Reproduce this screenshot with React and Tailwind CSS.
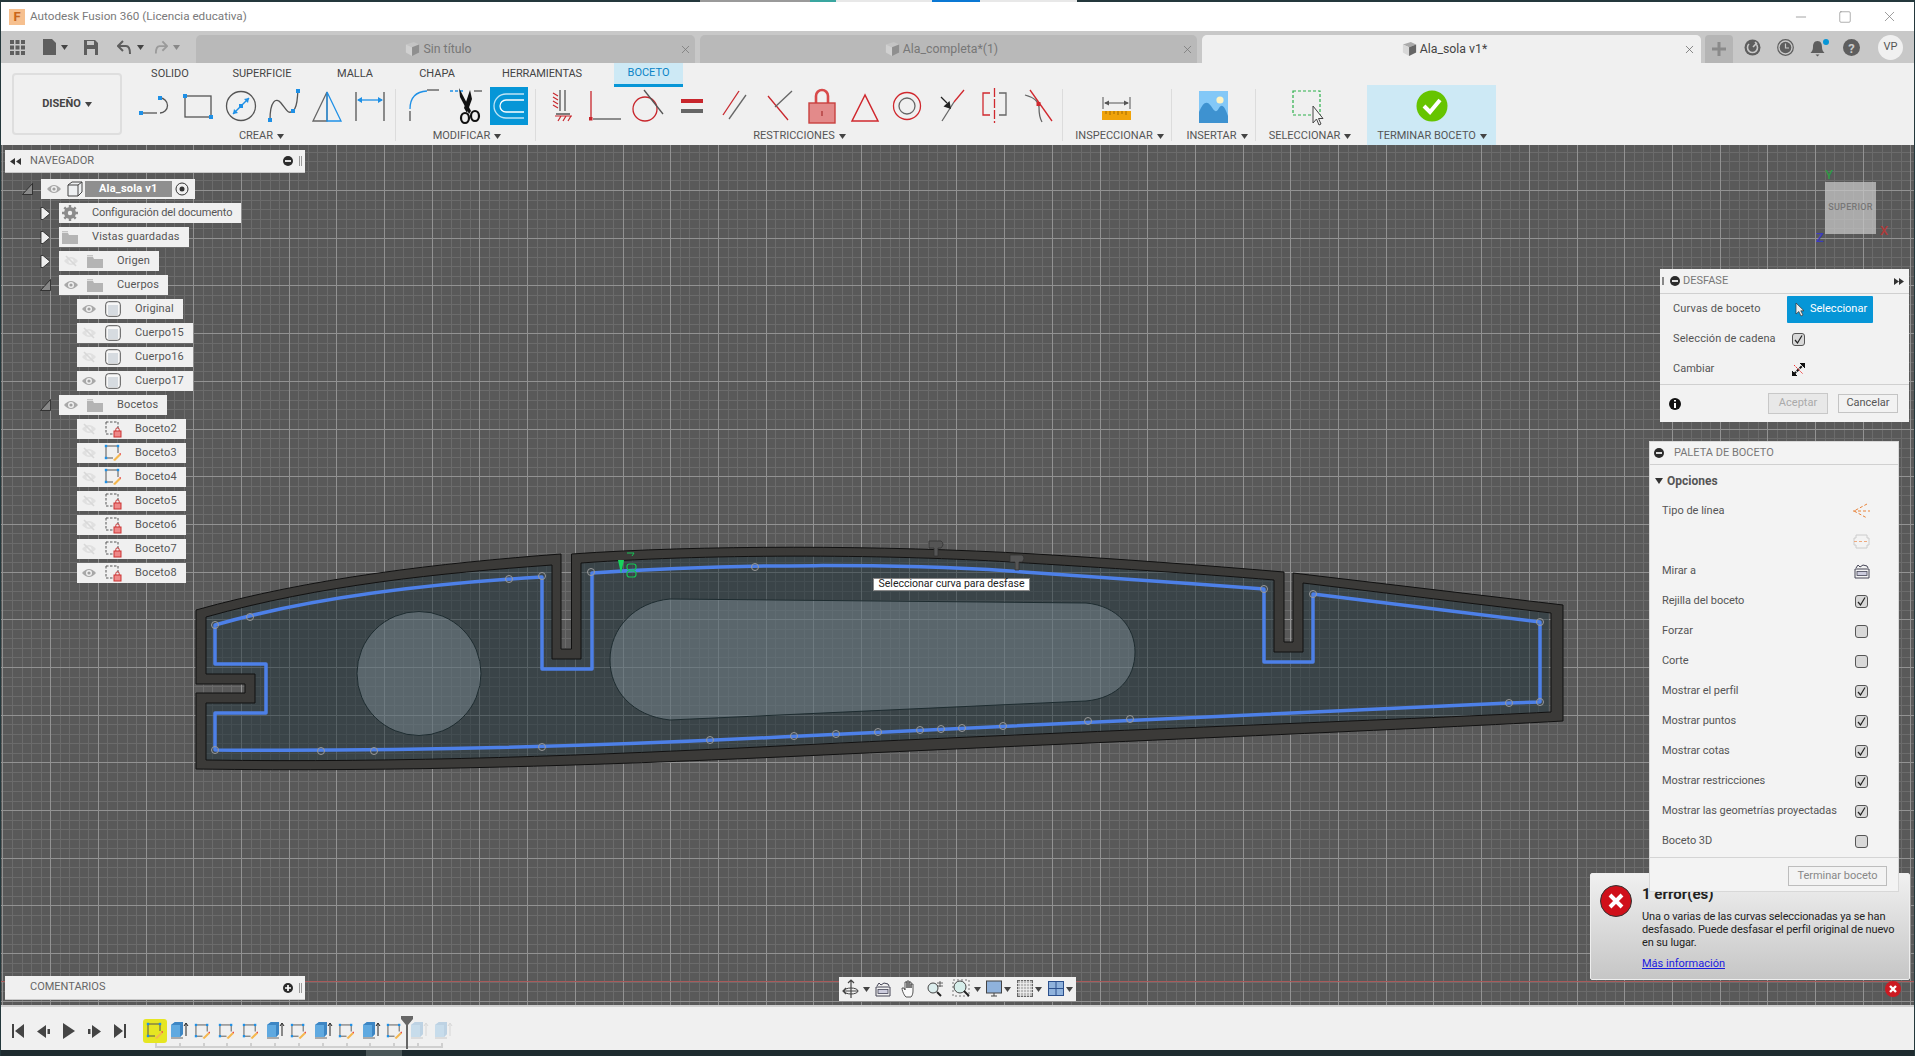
import { Minus, Square, X } from "lucide-react";

const Caret = ({ className = "ml-1" }) => (
  <svg width="7" height="5" viewBox="0 0 7 5" className={"shrink-0 " + className}><path d="M0 0H7L3.5 5Z" fill="#444" /></svg>
);

const Sq = ({ x, y, s = 4 }) => <rect x={x - s / 2} y={y - s / 2} width={s} height={s} fill="#1e90e6" />;

const CubeIcon = ({ dark }) => (
  <svg width="15" height="16" viewBox="0 0 17 18" className="mr-[3px]">
    <path d="M1 4L10 1L16 4L8 7Z" fill={dark ? "#aaa" : "#c4c4c4"} />
    <path d="M1 4L8 7V17L1 13Z" fill={dark ? "#d8d8d8" : "#d0d0d0"} />
    <path d="M8 7L16 4V13L8 17Z" fill={dark ? "#666" : "#8f8f8f"} />
  </svg>
);

const Tab = ({ label, cls, active }) => (
  <div className={"relative flex h-[28px] items-center justify-center rounded-t-[5px] pr-[14px] " + cls}>
    <CubeIcon dark={active} />
    <span className={active ? "text-[12.3px] text-[#444]" : "text-[12.3px] text-[#777]"}>{label}</span>
    <X size={13} strokeWidth={1.4} className={active ? "absolute right-[5px] text-[#666]" : "absolute right-[3px] text-[#777]"} />
  </div>
);

// ribbon icons, 32x38 with y=0 at page y 87
const tools = {
  line: (<g fill="none"><path d="M3 26H18" stroke="#555" strokeWidth="1.3" /><path d="M21 11A7.5 7.5 0 0 1 21 26" stroke="#555" strokeWidth="1.3" /><Sq x={2} y={26} /><Sq x={21} y={11} /></g>),
  rect: (<g fill="none"><rect x="3" y="9" width="26" height="21" stroke="#555" strokeWidth="1.3" /><Sq x={3} y={9} /><Sq x={29} y={30} /></g>),
  circle: (<g fill="none"><circle cx="16" cy="19" r="14.5" stroke="#555" strokeWidth="1.3" /><path d="M8 27L24 11" stroke="#1e90e6" strokeWidth="1.5" /><path d="M24 11l-5 1 4 4ZM8 27l5-1-4-4Z" fill="#1e90e6" /><Sq x={16} y={19} /></g>),
  spline: (<g fill="none"><path d="M2 33C2 14 8 10 13 16S20 28 25 24 29 10 30 4" stroke="#555" strokeWidth="1.3" /><Sq x={2} y={33} /><Sq x={25} y={24} /><Sq x={30} y={4} /></g>),
  tri: (<g fill="none"><path d="M16 5L2 34H16Z" stroke="#666" strokeWidth="1.3" /><path d="M16 5L30 34H16Z" stroke="#1e90e6" strokeWidth="1.3" /></g>),
  dim: (<g fill="none"><path d="M2 5V34M30 5V34" stroke="#555" strokeWidth="1.3" /><path d="M4 13H28" stroke="#1e90e6" strokeWidth="1.3" /><path d="M3 13l5-3v6ZM29 13l-5-3v6Z" fill="#1e90e6" /></g>),
  fillet: (<g fill="none"><path d="M3 34V24" stroke="#555" strokeWidth="1.3" /><path d="M3 22Q3 5 20 4" stroke="#1e90e6" strokeWidth="1.3" /><path d="M20 3H32" stroke="#555" strokeWidth="1.3" /></g>),
  scissors: (<g fill="none"><path d="M0 4H14" stroke="#1e90e6" strokeWidth="1.3" strokeDasharray="3 2" /><path d="M24 4H32" stroke="#555" strokeWidth="1.3" /><path d="M9 1L21 24L19 27L10 10Z" fill="#111" /><path d="M20 3L22 12L17 26L14 21Z" fill="#111" /><ellipse cx="15" cy="31" rx="4" ry="5" stroke="#111" strokeWidth="2.2" /><ellipse cx="25" cy="29" rx="4" ry="5" stroke="#111" strokeWidth="2.2" /></g>),
  hatch: (<g fill="none"><path d="M14 3V24M19 3V24M10 27H24" stroke="#555" strokeWidth="1.3" /><path d="M7 6l5 3M7 10l5 3M7 14l5 3M7 18l5 3M12 34l3-5M17 34l3-5M22 34l3-5M9 29H26" stroke="#c8262c" strokeWidth="1.2" /></g>),
  perp: (<g fill="none"><path d="M2 4V31" stroke="#c8262c" strokeWidth="1.3" /><path d="M4 32H32" stroke="#555" strokeWidth="1.3" /><rect x="0" y="30" width="3.5" height="3.5" fill="#c8262c" /></g>),
  tangent: (<g fill="none"><circle cx="13" cy="22" r="12" stroke="#c8262c" strokeWidth="1.3" /><path d="M12 3L31 27" stroke="#555" strokeWidth="1.3" /></g>),
  equal: (<g><rect x="5" y="12" width="22" height="4" fill="#c8262c" /><rect x="5" y="22" width="22" height="4" fill="#666" /></g>),
  parallel: (<g fill="none"><path d="M4 28L20 4" stroke="#c8262c" strokeWidth="1.3" /><path d="M10 32L27 8" stroke="#666" strokeWidth="1.3" /></g>),
  perpendicular: (<g fill="none"><path d="M6 9L26 33" stroke="#c8262c" strokeWidth="1.3" /><path d="M13 20L30 4" stroke="#666" strokeWidth="1.3" /></g>),
  lock: (<g><path d="M10 17V9a6 6 0 0 1 12 0V17" fill="none" stroke="#d84a4a" strokeWidth="2.6" /><rect x="3" y="16" width="26" height="20" fill="#e38a8a" stroke="#c8403f" strokeWidth="1.4" /><path d="M16 24V29" stroke="#a83030" strokeWidth="1.2" /></g>),
  triangle: (<path d="M16 8L3 34H29Z" fill="none" stroke="#d0282e" strokeWidth="1.5" />),
  concentric: (<g fill="none"><circle cx="15" cy="19" r="13.5" stroke="#d0282e" strokeWidth="1.3" /><circle cx="15" cy="19" r="8" stroke="#666" strokeWidth="1.3" /></g>),
  midpoint: (<g fill="none"><path d="M6 34L18 15" stroke="#666" strokeWidth="1.3" /><path d="M18 15L28 3" stroke="#d0282e" strokeWidth="1.3" /><path d="M5 10L11 16" stroke="#222" strokeWidth="1.2" /><path d="M15 22l-1.5-8-6 5.5Z" fill="#222" /></g>),
  symmetric: (<g fill="none"><path d="M11 6H4V28H11" stroke="#d0282e" strokeWidth="1.3" /><path d="M20 6H27V28H20" stroke="#666" strokeWidth="1.3" /><path d="M15.5 1V36" stroke="#d0282e" strokeWidth="1.3" strokeDasharray="9 2" /></g>),
  curvature: (<g fill="none"><path d="M3 8C10 10 17 14 17 20S17 30 20 35" stroke="#666" strokeWidth="1.3" /><path d="M8 3L30 34" stroke="#d0282e" strokeWidth="1.3" /><rect x="14.5" y="15" width="4" height="4" fill="#d0282e" /></g>),
  measure: (<g><path d="M2 10V22M29 10V22" stroke="#555" strokeWidth="1" /><path d="M4 16H27" stroke="#555" strokeWidth="1" /><path d="M3 16l5-2.5v5ZM28 16l-5-2.5v5Z" fill="#555" /><rect x="1" y="24" width="29" height="9" fill="#f0a30a" /><path d="M5 24v3M9 24v4M13 24v3M17 24v4M21 24v3M25 24v4" stroke="#8a5c00" strokeWidth=".8" /></g>),
  image: (<g><rect x="1" y="4" width="29" height="32" fill="#83c8f7" /><path d="M1 25C5 15 9 13 13 19S18 26 21 21 27 20 30 29V36H1Z" fill="#3e92d0" /><circle cx="22" cy="13" r="3.6" fill="#fdf3c4" /></g>),
  select: (<g fill="none"><rect x="2" y="4" width="27" height="24" stroke="#2bb04a" strokeWidth="1.2" strokeDasharray="3 2" /><path d="M22 19V36L25.5 32L28 38L30 37L27.5 31.5H32Z" fill="#f4f4f4" stroke="#444" strokeWidth="1" /></g>),
};

const Tool = ({ name }) => (
  <svg width="32" height="38" viewBox="0 0 32 38" className="shrink-0 overflow-visible">{tools[name]}</svg>
);

const Group = ({ cls, label, children, rowCls = "gap-[11px]", labelCls = "pr-[1px]" }) => (
  <div className={"flex h-[60px] shrink-0 flex-col items-center " + cls}>
    <div className={"mt-[2px] flex h-[38px] " + rowCls}>{children}</div>
    <div className={"mt-[4px] flex items-center whitespace-nowrap text-[11px] leading-[14px] text-[#555] " + labelCls}>{label}<Caret /></div>
  </div>
);

const Sep = ({ cls }) => <div className={"mt-[4px] h-[52px] w-px shrink-0 bg-[#dcdcdc] " + cls} />;

const Eye = ({ off }) => off ? (
  <svg width="16" height="12" viewBox="0 0 16 12"><path d="M1 6Q8 -2 15 6Q8 14 1 6Z" fill="#e0e0e0" /><circle cx="8" cy="6" r="2.5" fill="#f0f0f0" /><path d="M3 1L13 11" stroke="#d8d8d8" strokeWidth="1.6" /></svg>
) : (
  <svg width="16" height="12" viewBox="0 0 16 12"><path d="M1 6Q8 -2 15 6Q8 14 1 6Z" fill="#a8a8a8" /><circle cx="8" cy="6" r="3" fill="#f0f0f0" /><circle cx="8" cy="6" r="1.6" fill="#a0a0a0" /></svg>
);

const Folder = () => (
  <svg width="16" height="13" viewBox="0 0 16 13"><path d="M0 2H6L7 4H16V13H0Z" fill="#b4b4b4" /><path d="M0 0H6V1.4H0Z" fill="#c4c4c4" /></svg>
);
const Cyl = () => (
  <svg width="16" height="16" viewBox="0 0 16 16"><rect x=".7" y=".7" width="14.6" height="14.6" rx="3" fill="#f7f7f7" stroke="#555" /><rect x="3" y="4" width="10" height="10" fill="#d6dbe0" /></svg>
);
const Gear = () => (
  <svg width="16" height="16" viewBox="0 0 16 16"><circle cx="8" cy="8" r="4.5" fill="none" stroke="#8c8c8c" strokeWidth="3" /><path d="M8 0V16M0 8H16M2.3 2.3L13.7 13.7M13.7 2.3L2.3 13.7" stroke="#8c8c8c" strokeWidth="2.4" /><circle cx="8" cy="8" r="2.2" fill="#f0f0f0" /></svg>
);
const SketchIcon = ({ lock, size = 16 }) => (
  <svg width={size} height={size} viewBox="0 0 16 16" className="overflow-visible">
    <path d="M1 1H13M1 1V13M1 13H8M13 1V8" fill="none" stroke="#555" strokeWidth="1" strokeDasharray={lock ? "2.5 1.5" : "none"} />
    {lock ? (
      <g><rect x="9" y="10" width="7" height="6" fill="#e88" stroke="#c33" /><path d="M10.8 10V8.5a1.7 1.7 0 0 1 3.4 0V10" fill="none" stroke="#c33" /></g>
    ) : (
      <g><Sq x={1} y={1} s={2.4} /><Sq x={13} y={1} s={2.4} /><Sq x={1} y={13} s={2.4} /><path d="M8 15L14 9L16 10L10 16Z" fill="#f5b74e" /><path d="M14 9L16 10L16 8.6L15 8Z" fill="#e84a4a" /></g>
    )}
  </svg>
);

const ArrowRight = () => (
  <svg width="11" height="13" viewBox="0 0 11 13"><path d="M1 .5H3L10 6.5L3 12.5H1Z" fill="#eee" stroke="#222" strokeWidth=".8" /></svg>
);
const ArrowOpen = () => (
  <svg width="11" height="12" viewBox="0 0 11 12"><path d="M10.5 .5V11.5H.5Z" fill="#888" stroke="#222" strokeWidth=".8" /></svg>
);

const Row = ({ level, arrow, eye, icon, label, tight }) => (
  <div className={level === 1 ? "flex h-5 items-center pl-[40px]" : "flex h-5 items-center pl-[77px]"}>
    {level === 1 && <div className="mr-[8px] flex w-[11px] justify-center">{arrow === "open" ? <ArrowOpen /> : <ArrowRight />}</div>}
    <div className="flex h-5 items-center bg-[#f0f0f0] pr-[9px] text-[11px] text-[#555]">
      {eye ? (
        <>
          <div className="flex w-[28px] justify-center pr-[5px]"><Eye off={eye === "off"} /></div>
          <div className="flex w-[16px] justify-center">{icon}</div>
          <span className="ml-[14px] tracking-[0.15px]">{label}</span>
        </>
      ) : (
        <>
          <div className="ml-[3px] flex w-[16px] justify-center">{icon}</div>
          <span className={tight ? "ml-[14px] tracking-[-0.15px]" : "ml-[14px] tracking-[0.15px]"}>{label}</span>
        </>
      )}
    </div>
  </div>
);

const tree = [
  { level: 1, arrow: "closed", icon: <Gear />, label: "Configuración del documento", tight: true },
  { level: 1, arrow: "closed", icon: <Folder />, label: "Vistas guardadas" },
  { level: 1, arrow: "closed", eye: "off", icon: <Folder />, label: "Origen" },
  { level: 1, arrow: "open", eye: "on", icon: <Folder />, label: "Cuerpos" },
  { level: 2, eye: "on", icon: <Cyl />, label: "Original" },
  { level: 2, eye: "off", icon: <Cyl />, label: "Cuerpo15" },
  { level: 2, eye: "off", icon: <Cyl />, label: "Cuerpo16" },
  { level: 2, eye: "on", icon: <Cyl />, label: "Cuerpo17" },
  { level: 1, arrow: "open", eye: "on", icon: <Folder />, label: "Bocetos" },
  { level: 2, eye: "off", icon: <SketchIcon lock />, label: "Boceto2" },
  { level: 2, eye: "off", icon: <SketchIcon />, label: "Boceto3" },
  { level: 2, eye: "off", icon: <SketchIcon />, label: "Boceto4" },
  { level: 2, eye: "off", icon: <SketchIcon lock />, label: "Boceto5" },
  { level: 2, eye: "off", icon: <SketchIcon lock />, label: "Boceto6" },
  { level: 2, eye: "off", icon: <SketchIcon lock />, label: "Boceto7" },
  { level: 2, eye: "on", icon: <SketchIcon lock />, label: "Boceto8" },
];

const CircleSign = ({ sign }) => (
  <svg width="10" height="10" viewBox="0 0 10 10" className="shrink-0">
    <circle cx="5" cy="5" r="5" fill="#2b2b2b" />
    <path d={sign === "plus" ? "M2 5H8M5 2V8" : "M2 5H8"} stroke="#fff" strokeWidth="1.7" />
  </svg>
);

const Check = ({ on }) => (
  <div className="flex h-[13px] w-[13px] items-center justify-center rounded-[3px] border border-[#555] bg-[#d8d8d8]">
    {on && <svg width="11" height="11" viewBox="0 0 11 11"><path d="M2 6L4.5 9L9 1.5" fill="none" stroke="#222" strokeWidth="1.2" /></svg>}
  </div>
);

const paletteRows = [
  ["Mirar a", "look"],
  ["Rejilla del boceto", true],
  ["Forzar", false],
  ["Corte", false],
  ["Mostrar el perfil", true],
  ["Mostrar puntos", true],
  ["Mostrar cotas", true],
  ["Mostrar restricciones", true],
  ["Mostrar las geometrías proyectadas", true],
  ["Boceto 3D", false],
];

const LookIcon = ({ w = 16 }) => (
  <svg width={w} height={w} viewBox="0 0 16 16" className="overflow-visible">
    <path d="M1 6H15V15H1Z" fill="none" stroke="#445" strokeWidth="1" />
    <rect x="3" y="8.5" width="10" height="4" fill="#ccd" stroke="#445" strokeWidth=".8" />
    <path d="M2 5L4 2L6 4L9 2L13 3L14 5" fill="none" stroke="#445" strokeWidth="1" />
  </svg>
);

const points = [[215,625],[250,617],[509,579],[542,576],[591,572],[755,567],[215,750],[321,751],[374,751],[542,747],[710,740],[1264,589],[1313,594],[1540,622],[1540,702],[1509,703],[1130,719],[1088,721],[1003,726],[962,728],[941,729],[920,730],[878,732],[836,734],[794,736]];

// grid lines snapped to whole pixels, every 5th one is a major line
const gridPath = (major) => {
  let d = "";
  for (let i = -60; i < 300; i++) {
    if ((i % 5 === 0) !== major) continue;
    const x = Math.round(412.7 + i * 9.54 - 43 * 9.54) + 0.5;
    if (x >= 0 && x <= 1915) d += `M${x} 145V1006`;
    const y = Math.round(190 + i * 9.54 - 5 * 9.54) + 0.5;
    if (y >= 145 && y <= 1006) d += `M0 ${y}H1915`;
  }
  return d;
};

// drawing of the sketch: grid, wing outline, offset profile
const Drawing = () => (
  <svg width="1915" height="861" viewBox="0 145 1915 861" className="absolute inset-0">
    <rect x="0" y="145" width="1915" height="861" fill="#595959" />
    <path d={gridPath(false)} stroke="#6b6b6b" strokeWidth="1" fill="none" />
    <path d={gridPath(true)} stroke="#929292" strokeWidth="1" fill="none" />
    <path d="M0 981.5H1915" stroke="#a85a5a" strokeWidth="1" />

    <path d="M206 617C320 585 440 573 552 565V659H581V563C720 553 900 555 1010 562C1110 568 1190 573 1274 580V652H1303V583L1549 613V712C1400 720 1100 730 780 746C600 755 400 763 206 760V703H255V674H206Z" fill="#1b2f37" fillOpacity=".5" />
    <circle cx="419" cy="673.5" r="62" fill="#a5b5c0" fillOpacity=".3" stroke="#1e2c30" strokeWidth="1" />
    <path d="M670 599L1086 603C1118 606 1135 628 1135 652C1135 678 1118 698 1086 701L670 720C632 716 610 690 610 660C610 628 635 602 670 599Z" fill="#a5b5c0" fillOpacity=".3" stroke="#1e2c30" strokeWidth="1" />
    <path
      fillRule="evenodd"
      fill="#3b3a38"
      stroke="#111"
      strokeWidth="1"
      d="M196 610C310 578 440 563 561 554V649H571.5V554C700 545 880 545 1035 554C1120 559 1200 565 1284 572V642H1293V573L1563 605V721C1400 730 1100 742 780 757C600 765 400 772 196 769V693H245V684H196Z M206 617C320 585 440 573 552 565V659H581V563C720 553 900 555 1010 562C1110 568 1190 573 1274 580V652H1303V583L1551 613V712C1400 720 1100 730 780 746C600 755 400 763 206 760V703H255V674H206Z"
    />
    <path
      fill="none"
      stroke="#4d80e8"
      strokeWidth="3.5"
      strokeLinejoin="round"
      d="M215 625C320 595 440 583 542 577V669H592V573C740 563 900 564 1010 571C1100 577 1180 583 1264 589V662H1313V594L1540 622V702L1509 703C1300 713 1000 726 780 737C640 744 450 752 215 750V713H266V664H215Z"
    />
    {points.map(([x, y], i) => (
      <circle key={i} cx={x} cy={y} r="3.5" fill="none" stroke="#9a9a9a" strokeWidth="1" />
    ))}
    <path d="M618 560L624 560L621 574Z" fill="#16d45c" />
    <path d="M627 553H634L632 556" fill="none" stroke="#16c456" strokeWidth="1" />
    <rect x="627" y="564" width="9" height="6" rx="2.5" fill="none" stroke="#16c456" strokeWidth="1.2" />
    <rect x="627" y="571" width="9" height="6" rx="2.5" fill="none" stroke="#16c456" strokeWidth="1.2" />
    <path d="M929 541H941Q945 544 941 548H938V556H934V548H929Z" fill="#555" stroke="#333" strokeWidth=".8" />
    <path d="M1010 555H1022Q1026 558 1022 562H1019V570H1015V562H1010Z" fill="#555" stroke="#333" strokeWidth=".8" />
  </svg>
);

const NavIcon = ({ w = 16, cls = "", children }) => (
  <svg width={w} height="18" viewBox={`0 0 ${w} 18`} className={"shrink-0 overflow-visible " + cls}>{children}</svg>
);

const tlItems = ["cube","sketch","sketch","sketch","cube","sketch","cube","sketch","cube","sketch","fade","fade"];

const TlCube = ({ fade }) => (
  <svg width="16" height="20" viewBox="0 0 16 20" className="overflow-visible">
    <g opacity={fade ? 0.28 : 1}>
      <path d="M0 4L4 1H12V13L9 16H0Z" fill="#5fa9e0" />
      <path d="M9 4H0L4 1H12ZM9 4L12 1V13L9 16Z" fill="#3d86c4" />
      <path d="M0 17H12" stroke="#aaa" strokeWidth="2" />
      <path d="M15 15V3M13 5L15 2L17 5" fill="none" stroke={fade ? "#999" : "#222"} strokeWidth="1" />
    </g>
  </svg>
);

export default function App() {
  return (
    <div className="relative flex h-[1056px] w-[1915px] flex-col overflow-hidden bg-[#1e2b2f] font-[Roboto,sans-serif]">
      {/* desktop strip */}
      <div className="flex h-[2px] shrink-0">
        <div className="w-[700px] bg-[#24383c]" />
        <div className="w-[110px] bg-[#9a9a9a]" />
        <div className="w-[26px] bg-[#3aa6a0]" />
        <div className="w-[96px] bg-[#e8e8e8]" />
        <div className="w-[48px] bg-[#0a78d4]" />
        <div className="w-[97px] bg-[#e8e8e8]" />
        <div className="flex-1 bg-[#24383c]" />
      </div>

      {/* title bar */}
      <div className="flex h-[29px] shrink-0 items-center bg-white pl-[9px]">
        <div className="flex h-[16px] w-[16px] items-center justify-center bg-[#f6c08f] text-[13px] font-bold leading-none text-[#c9651a]">F</div>
        <span className="ml-[5px] text-[11.7px] text-[#7a7a7a]">Autodesk Fusion 360 (Licencia educativa)</span>
        <div className="ml-auto flex items-center gap-[29px] pr-[17px] text-[#777]">
          <Minus size={16} strokeWidth={1} />
          <Square size={14} strokeWidth={1} />
          <X size={17} strokeWidth={1} />
        </div>
      </div>

      {/* tab bar */}
      <div className="flex h-[32px] shrink-0 items-end bg-[#c8c8c8]">
        <div className="flex h-[32px] w-[196px] shrink-0 items-center text-[#666]">
          <svg width="15" height="15" viewBox="0 0 15 15" className="ml-[10px]"><path d="M0 0h4v4H0zM5.5 0h4v4h-4zM11 0h4v4h-4zM0 5.5h4v4H0zM5.5 5.5h4v4h-4zM11 5.5h4v4h-4zM0 11h4v4H0zM5.5 11h4v4h-4zM11 11h4v4h-4z" fill="#5e5e5e" /></svg>
          <svg width="13" height="16" viewBox="0 0 13 16" className="ml-[18px]"><path d="M0 0H9L13 4V16H0Z" fill="#5e5e5e" /></svg>
          <Caret className="ml-[5px]" />
          <svg width="14" height="15" viewBox="0 0 14 15" className="ml-[16px]"><path d="M0 0H11L14 3V15H0Z" fill="#5e5e5e" /><rect x="3" y="1" width="7" height="4" fill="#c8c8c8" /><rect x="3" y="9" width="8" height="6" fill="#c8c8c8" /></svg>
          <svg width="15" height="15" viewBox="0 0 15 15" className="ml-[19px]"><path d="M6 1L1 6L6 11M1 6H9Q13 6 13 14" fill="none" stroke="#5e5e5e" strokeWidth="2" /></svg>
          <Caret className="ml-[5px]" />
          <svg width="14" height="15" viewBox="0 0 15 15" className="ml-[10px]"><path d="M9 1L14 6L9 11M14 6H6Q2 6 2 14" fill="none" stroke="#9a9a9a" strokeWidth="2" /></svg>
          <svg width="7" height="5" viewBox="0 0 7 5" className="ml-[5px]"><path d="M0 0H7L3.5 5Z" fill="#888" /></svg>
        </div>
        <Tab label="Sin título" cls="w-[499px] bg-[#b9b9b9]" />
        <Tab label="Ala_completa*(1)" cls="ml-[5px] w-[497px] bg-[#b9b9b9]" />
        <Tab label="Ala_sola v1*" cls="ml-[5px] w-[499px] bg-[#f0f0f0]" active />
        <div className="ml-[4px] flex h-[28px] w-[28px] items-center justify-center rounded-t-[4px] bg-[#b5b5b5]">
          <svg width="14" height="14" viewBox="0 0 14 14"><path d="M7 0V14M0 7H14" stroke="#8a8a8a" strokeWidth="3" /></svg>
        </div>
        <div className="flex h-[32px] flex-1 items-center pl-[11px]">
          <svg width="17" height="17" viewBox="0 0 17 17"><circle cx="8.5" cy="8.5" r="8" fill="#5e5e5e" /><path d="M5 5A5 5 0 1 0 12 5L9 8M11 3L13 5" fill="none" stroke="#c8c8c8" strokeWidth="1.6" /></svg>
          <svg width="17" height="17" viewBox="0 0 17 17" className="ml-[16px]"><circle cx="8.5" cy="8.5" r="7.8" fill="#c8c8c8" stroke="#5e5e5e" strokeWidth="1.2" /><circle cx="8.5" cy="8.5" r="5.8" fill="#5e5e5e" /><path d="M8.5 4.5V9H12" fill="none" stroke="#c8c8c8" strokeWidth="1.2" /></svg>
          <div className="relative ml-[16px] h-[17px] w-[17px]">
            <svg width="15" height="17" viewBox="0 0 15 17" className="mt-px"><path d="M7.5 1C4 1 3 4 3 7C3 10 2 11 .5 13H14.5C13 11 12 10 12 7C12 4 11 1 7.5 1ZM5.5 14.5H9.5L7.5 16.5Z" fill="#5e5e5e" /></svg>
            <div className="absolute right-[-2px] top-0 h-[6px] w-[6px] rounded-full bg-[#0696d7]" />
          </div>
          <svg width="17" height="17" viewBox="0 0 17 17" className="ml-[16px]"><circle cx="8.5" cy="8.5" r="8.5" fill="#5e5e5e" /><text x="8.5" y="13.5" textAnchor="middle" fontSize="13" fontWeight="700" fill="#c8c8c8">?</text></svg>
          <div className="ml-[18px] flex h-[25px] w-[25px] items-center justify-center rounded-full bg-[#f0f0f0] text-[11px] text-[#555]">VP</div>
        </div>
      </div>

      {/* ribbon */}
      <div className="flex h-[82px] shrink-0 bg-[#f0f0f0] pl-[12px]">
        <div className="mt-[10px] flex h-[62px] w-[110px] shrink-0 items-center justify-center rounded-[4px] border-2 border-[#dedede] text-[11px] font-bold text-[#444]">
          DISEÑO<Caret />
        </div>
        <div className="flex flex-col">
          <div className="ml-[4px] flex h-[22px] text-[11px] text-[#444]">
            <div className="flex h-[22px] w-[88px] items-center justify-center">SOLIDO</div>
            <div className="flex h-[22px] w-[96px] items-center justify-center">SUPERFICIE</div>
            <div className="flex h-[22px] w-[90px] items-center justify-center">MALLA</div>
            <div className="flex h-[22px] w-[74px] items-center justify-center">CHAPA</div>
            <div className="flex h-[22px] w-[134px] items-center justify-center pl-[2px] tracking-[-0.1px]">HERRAMIENTAS</div>
            <div className="relative z-10 ml-[6px] flex h-[24px] w-[69px] items-center justify-center border-b-[3px] border-[#0696d7] bg-[#cde9f5] text-[#0a84c6]">BOCETO</div>
          </div>
          <div className="flex h-[60px]">
            <Group cls="ml-[16px] w-[248px]" label="CREAR">
              <Tool name="line" /><Tool name="rect" /><Tool name="circle" /><Tool name="spline" /><Tool name="tri" /><Tool name="dim" />
            </Group>
            <Sep cls="ml-[9px]" />
            <Group cls="ml-[11px] w-[121px]" label="MODIFICAR" rowCls="gap-[11px]">
              <Tool name="fillet" /><Tool name="scissors" />
              <svg width="38" height="38" viewBox="0 0 38 38" className="-ml-[3px] shrink-0 bg-[#0696d7]">
                <path d="M34 7H16A12 12 0 0 0 16 31H34" fill="none" stroke="#bfe4f5" strokeWidth="1.3" />
                <path d="M34 13H16A6 6 0 0 0 16 25H34" fill="none" stroke="#fff" strokeWidth="1.3" />
              </svg>
            </Group>
            <Sep cls="ml-[7px]" />
            <Group cls="ml-[10px] w-[508px]" label="RESTRICCIONES" rowCls="gap-[11.3px]">
              <Tool name="hatch" /><Tool name="perp" /><Tool name="tangent" /><Tool name="equal" /><Tool name="parallel" /><Tool name="perpendicular" /><Tool name="lock" /><Tool name="triangle" /><Tool name="concentric" /><Tool name="midpoint" /><Tool name="symmetric" /><Tool name="curvature" />
            </Group>
            <Sep cls="ml-[8px]" />
            <Group cls="ml-[7px] w-[93px]" label="INSPECCIONAR" labelCls="pl-[6px]"><Tool name="measure" /></Group>
            <Sep cls="ml-[8px]" />
            <Group cls="ml-[7px] w-[70px]" label="INSERTAR" labelCls="pl-[6px]"><Tool name="image" /></Group>
            <Sep cls="ml-[6px]" />
            <Group cls="ml-[5px] w-[92px]" label="SELECCIONAR" labelCls="pl-[6px]"><Tool name="select" /></Group>
            <Group cls="ml-[14px] w-[129px] bg-[#cde9f5]" label="TERMINAR BOCETO" labelCls="pl-[1px]">
              <svg width="32" height="38" viewBox="0 0 32 38"><circle cx="16" cy="19" r="15.5" fill="#66c400" /><path d="M8 19L14 25L24 13" fill="none" stroke="#fff" strokeWidth="4" /></svg>
            </Group>
          </div>
        </div>
      </div>

      {/* canvas */}
      <div className="relative h-[860px] shrink-0 overflow-hidden">
        <Drawing />

        {/* navigator */}
        <div className="absolute left-[5px] top-[5px] flex h-[23px] w-[300px] items-center border-b border-[#c8c8c8] bg-[#f0f0f0] text-[11px] text-[#666]">
          <svg width="11" height="7" viewBox="0 0 11 7" className="ml-[5px]"><path d="M5 0V7L0 3.5ZM11 0V7L6 3.5Z" fill="#333" /></svg>
          <span className="ml-[9px]">NAVEGADOR</span>
          <div className="ml-auto mr-[3px] flex items-center gap-[6px]">
            <CircleSign />
            <div className="h-[10px] w-[3px] border-x border-[#999]" />
          </div>
        </div>
        <div className="absolute left-0 top-[34px] flex flex-col gap-1">
          <div className="flex h-5 items-center pl-[22px]">
            <div className="mr-[9px] w-[10px]"><ArrowOpen /></div>
            <div className="flex h-5 items-center bg-[#f0f0f0] pl-[2px] pr-[6px]">
              <div className="flex w-[22px] justify-center"><Eye /></div>
              <div className="flex h-4 items-center bg-[#8f8f8f]">
                <svg width="20" height="16" viewBox="0 0 20 16" className="bg-[#f0f0f0]"><path d="M3 4L7 1H17V11L13 15H3Z" fill="#eef0f2" stroke="#444" /><path d="M3 4H13V15M13 4L17 1" fill="none" stroke="#444" /></svg>
                <span className="px-[14px] text-[11px] font-bold tracking-[0.2px] text-white">Ala_sola v1</span>
              </div>
              <svg width="14" height="14" viewBox="0 0 14 14" className="ml-[3px]"><circle cx="7" cy="7" r="6" fill="none" stroke="#333" /><circle cx="7" cy="7" r="2.5" fill="#333" /></svg>
            </div>
          </div>
          {tree.map((r) => <Row key={r.label} {...r} />)}
        </div>

        {/* comentarios */}
        <div className="absolute left-[5px] top-[831px] flex h-[24px] w-[300px] items-center border-b border-[#c8c8c8] bg-[#f0f0f0] pl-[25px] text-[11px] text-[#666]">
          <span>COMENTARIOS</span>
          <div className="ml-auto mr-[3px] flex items-center gap-[6px]">
            <CircleSign sign="plus" />
            <div className="h-[10px] w-[3px] border-x border-[#999]" />
          </div>
        </div>

        {/* view cube */}
        <div className="absolute left-[1825px] top-[37px] flex h-[52px] w-[51px] items-center justify-center bg-[#c6c6c6]/75 text-[9px] font-medium tracking-[0.3px] text-[#777]">SUPERIOR</div>
        <span className="absolute left-[1825px] top-[20px] text-[13px] font-medium text-[#2f9a45]">Y</span>
        <span className="absolute left-[1816px] top-[83px] text-[13px] font-medium text-[#3a3ac0]">Z</span>
        <span className="absolute left-[1880px] top-[76px] text-[13px] font-medium text-[#b03a3a]">X</span>

        {/* tooltip */}
        <div className="absolute left-[873px] top-[433px] flex h-[13px] w-[157px] items-center justify-center border border-[#888] bg-white text-[10.5px] leading-none text-[#222]">Seleccionar curva para desfase</div>

        {/* desfase */}
        <div className="absolute left-[1660px] top-[124px] flex h-[153px] w-[249px] flex-col bg-[#f2f2f2] text-[11px] text-[#555]">
          <div className="flex h-[25px] shrink-0 items-center border-b border-[#d0d0d0] pl-[2px]">
            <div className="h-[8px] w-[2px] bg-[#888]" />
            <div className="ml-[6px]"><CircleSign /></div>
            <span className="ml-[3px] text-[#777]">DESFASE</span>
            <svg width="10" height="7" viewBox="0 0 10 7" className="ml-auto mr-[5px]"><path d="M0 0V7L5 3.5ZM5 0V7L10 3.5Z" fill="#333" /></svg>
          </div>
          <div className="flex h-[30px] items-center pl-[13px]">
            <span className="w-[114px] tracking-[0.15px]">Curvas de boceto</span>
            <div className="flex h-[27px] w-[86px] items-center rounded-[1px] bg-[#0696d7] pl-[8px] text-white">
              <svg width="10" height="15" viewBox="0 0 10 15" className="mr-[5px]"><path d="M1 1V12L3.8 9.5L6 14L8 13L5.8 8.8H9Z" fill="#eee" stroke="#333" strokeWidth=".7" /></svg>
              Seleccionar
            </div>
          </div>
          <div className="flex h-[30px] items-center pl-[13px]">
            <span className="w-[119px] tracking-[0.1px]">Selección de cadena</span><Check on />
          </div>
          <div className="flex h-[30px] items-center pl-[13px]">
            <span className="w-[119px]">Cambiar</span>
            <svg width="13" height="13" viewBox="0 0 13 13"><path d="M0 13V8L5 13ZM13 0V5L8 0Z" fill="#111" stroke="#111" /><path d="M2 11L11 2" stroke="#111" strokeWidth="2" strokeDasharray="3 1" /><path d="M2 2L11 11" stroke="#e33" strokeWidth="1" strokeDasharray="2 1" /></svg>
          </div>
          <div className="flex flex-1 items-center border-t border-[#d0d0d0] pl-[9px]">
            <svg width="12" height="12" viewBox="0 0 12 12"><circle cx="6" cy="6" r="6" fill="#111" /><path d="M6 5V10M6 2V3.6" stroke="#fff" strokeWidth="2" /></svg>
            <div className="ml-[87px] flex h-[21px] w-[60px] items-center justify-center border border-[#c8c8c8] bg-[#e8e8e8] text-[#aaa]">Aceptar</div>
            <div className="ml-[10px] flex h-[19px] w-[60px] items-center justify-center border border-[#c4c4c4]">Cancelar</div>
          </div>
        </div>

        {/* error toast */}
        <div className="absolute left-[1590px] top-[728px] h-[107px] w-[320px] whitespace-nowrap rounded-[2px] border border-[#eee] bg-gradient-to-b from-[#f0f0f0] to-[#c6c6c6] pl-[51px] pt-[11px] text-[11px] leading-[13px] text-[#222]">
          <svg width="32" height="32" viewBox="0 0 32 32" className="absolute left-[9px] top-[11px]"><circle cx="16" cy="16" r="15.5" fill="#d0101a" stroke="#333" strokeWidth="1" /><path d="M10 10L22 22M22 10L10 22" stroke="#fff" strokeWidth="4" /></svg>
          <div className="text-[15px] font-bold leading-[18px]">1 error(es)</div>
          <div className="mt-[7px] tracking-[-0.12px]">Una o varias de las curvas seleccionadas ya se han<br />desfasado. Puede desfasar el perfil original de nuevo<br />en su lugar.</div>
          <div className="mt-[8px] text-[#1a1ae0] underline">Más información</div>
        </div>
        <svg width="16" height="16" viewBox="0 0 16 16" className="absolute left-[1885px] top-[836px]"><circle cx="8" cy="8" r="8" fill="#cc1a22" /><path d="M5 5L11 11M11 5L5 11" stroke="#fff" strokeWidth="2.4" /></svg>

        {/* paleta */}
        <div className="absolute left-[1649px] top-[296px] flex h-[451px] w-[250px] flex-col border border-[#d8d8d8] bg-[#f3f3f3] text-[11px] text-[#555]">
          <div className="flex h-[23px] shrink-0 items-center border-b border-[#d0d0d0] pl-[4px]">
            <CircleSign />
            <span className="ml-[10px] text-[#777]">PALETA DE BOCETO</span>
          </div>
          <div className="flex h-[31px] shrink-0 items-center pl-[5px] text-[12px] font-bold">
            <svg width="8" height="6" viewBox="0 0 8 6" className="mr-[4px]"><path d="M0 0H8L4 6Z" fill="#333" /></svg>Opciones
          </div>
          <div className="flex h-[30px] shrink-0 items-center justify-between pl-[12px] pr-[28px]">
            <span>Tipo de línea</span>
            <svg width="17" height="16" viewBox="0 0 17 16"><path d="M14 1L1 8L14 15M0 8H17" fill="none" stroke="#e8833a" strokeWidth="1" strokeDasharray="3 2" /></svg>
          </div>
          <div className="flex h-[30px] shrink-0 items-center justify-end pr-[28px]">
            <svg width="17" height="15" viewBox="0 0 17 15"><path d="M3 1H14V4H16V11H14V14H3V11H1V4H3Z" fill="none" stroke="#ccc" /><path d="M1 7.5H16" stroke="#eeaa80" strokeDasharray="3 2" /></svg>
          </div>
          {paletteRows.map(([label, v]) => (
            <div key={label} className="flex h-[30px] shrink-0 items-center justify-between pl-[12px] pr-[30px]">
              <span className="tracking-[-0.05px]">{label}</span>
              {v === "look" ? <div className="-mr-[2px]"><LookIcon /></div> : <Check on={v} />}
            </div>
          ))}
          <div className="mt-px flex flex-1 items-start justify-end border-t border-[#d4d4d4] pr-[11px] pt-[8px]">
            <div className="flex h-[20px] w-[99px] items-center justify-center border border-[#bdbdbd] text-[#888]">Terminar boceto</div>
          </div>
        </div>

        {/* nav bar */}
        <div className="absolute left-[839px] top-[832px] flex h-[24px] w-[237px] items-center bg-[#f0f0f0] pl-[4px]">
          <NavIcon w={16}><path d="M8 0V18M5 3L8 0L11 3M0 11H15M3 8L0 11L3 14" fill="none" stroke="#444" strokeWidth="1.2" /><ellipse cx="8" cy="11" rx="7" ry="3" fill="none" stroke="#444" /></NavIcon>
          <Caret className="ml-[4px]" />
          <div className="ml-[5px]"><LookIcon w={16} /></div>
          <NavIcon w={16} cls="ml-[10px]"><path d="M4 16C2 13 1 10 1 8L3 8L4 10V2H6V8V1H8V8V2H10V8V4H12V11C12 14 11 16 10 17H5Z" fill="#fafafa" stroke="#444" strokeWidth=".9" /></NavIcon>
          <NavIcon w={16} cls="ml-[10px]"><circle cx="6" cy="8" r="5" fill="#dceeee" stroke="#444" /><path d="M10 12L14 16" stroke="#222" strokeWidth="2" /><path d="M13 1V7M10 3H16M10 6H16" stroke="#444" strokeWidth=".8" /></NavIcon>
          <NavIcon w={16} cls="ml-[10px]"><rect x="0" y="0" width="16" height="16" fill="none" stroke="#777" strokeDasharray="2 2" /><circle cx="7" cy="7" r="6" fill="#d6eeea" stroke="#444" /><path d="M11 11L16 16" stroke="#222" strokeWidth="2" /></NavIcon>
          <Caret className="ml-[5px]" />
          <NavIcon w={16} cls="ml-[5px]"><rect x=".5" y="1" width="15" height="12" fill="#8fb2dc" stroke="#444" /><path d="M5 16H11M8 13V16" stroke="#444" /></NavIcon>
          <Caret className="ml-[2px]" />
          <NavIcon w={16} cls="ml-[6px]"><rect x=".5" y=".5" width="15" height="16" fill="#bbb" stroke="#666" /><path d="M3.5 0V17M6.5 0V17M9.5 0V17M12.5 0V17M0 3.5H16M0 6.5H16M0 9.5H16M0 12.5H16" stroke="#f0f0f0" strokeWidth=".8" /></NavIcon>
          <Caret className="ml-[2px]" />
          <NavIcon w={16} cls="ml-[6px]"><rect x=".5" y="1.5" width="15" height="14" fill="#8fb2dc" stroke="#2b4f8c" /><path d="M8 1V16M0 8.5H16" stroke="#2b4f8c" /></NavIcon>
          <Caret className="ml-[2px]" />
        </div>
      </div>

      {/* timeline */}
      <div className="relative flex h-[45px] shrink-0 items-center border-t-2 border-[#cfcfcf] bg-[#f0f0f0] pt-[5px]">
        <div className="ml-[12px] flex items-center gap-[13px]">
          <svg width="12" height="14" viewBox="0 0 12 14"><path d="M0 0H2V14H0ZM12 0V14L3 7Z" fill="#444" /></svg>
          <svg width="13" height="13" viewBox="0 0 13 13"><path d="M9 0V13L0 6.5ZM10.5 4H13V9H10.5Z" fill="#444" /></svg>
          <svg width="12" height="16" viewBox="0 0 12 16"><path d="M0 0L12 8L0 16Z" fill="#444" /></svg>
          <svg width="13" height="13" viewBox="0 0 13 13"><path d="M4 0V13L13 6.5ZM0 4H2.5V9H0Z" fill="#444" /></svg>
          <svg width="12" height="14" viewBox="0 0 12 14"><path d="M10 0H12V14H10ZM0 0V14L9 7Z" fill="#444" /></svg>
        </div>
        <div className="ml-[17px] flex h-[24px] w-[24px] items-center justify-center rounded-[3px] bg-[#e6e622]"><SketchIcon size={16} /></div>
        <div className="ml-[4px] flex">
          {tlItems.map((t, i) => (
            <div key={i} className="flex h-[24px] w-[24px] items-center justify-start">
              {t === "sketch" ? <SketchIcon size={15} /> : <TlCube fade={t === "fade"} />}
            </div>
          ))}
        </div>
        {/* connector and marker sit over the items */}
        <div className="absolute bottom-[2px] left-[155px] flex h-[5px] w-[288px] justify-between border-b-2 border-[#cfcfcf]">
          {Array.from({ length: 13 }).map((_, i) => <div key={i} className="h-[5px] w-[2px] bg-[#cfcfcf]" />)}
        </div>
        <svg width="12" height="33" viewBox="0 0 12 33" className="absolute left-[401px] top-[9px]"><path d="M0 0H12V3L7 9V33H5V9L0 3Z" fill="#666" /></svg>
      </div>

      {/* bottom strip */}
      <div className="flex flex-1">
        <div className="ml-[366px] w-[36px] bg-[#4a5658]" />
      </div>
      <div className="pointer-events-none absolute inset-0 border-x border-[#24383c]" />
    </div>
  );
}
